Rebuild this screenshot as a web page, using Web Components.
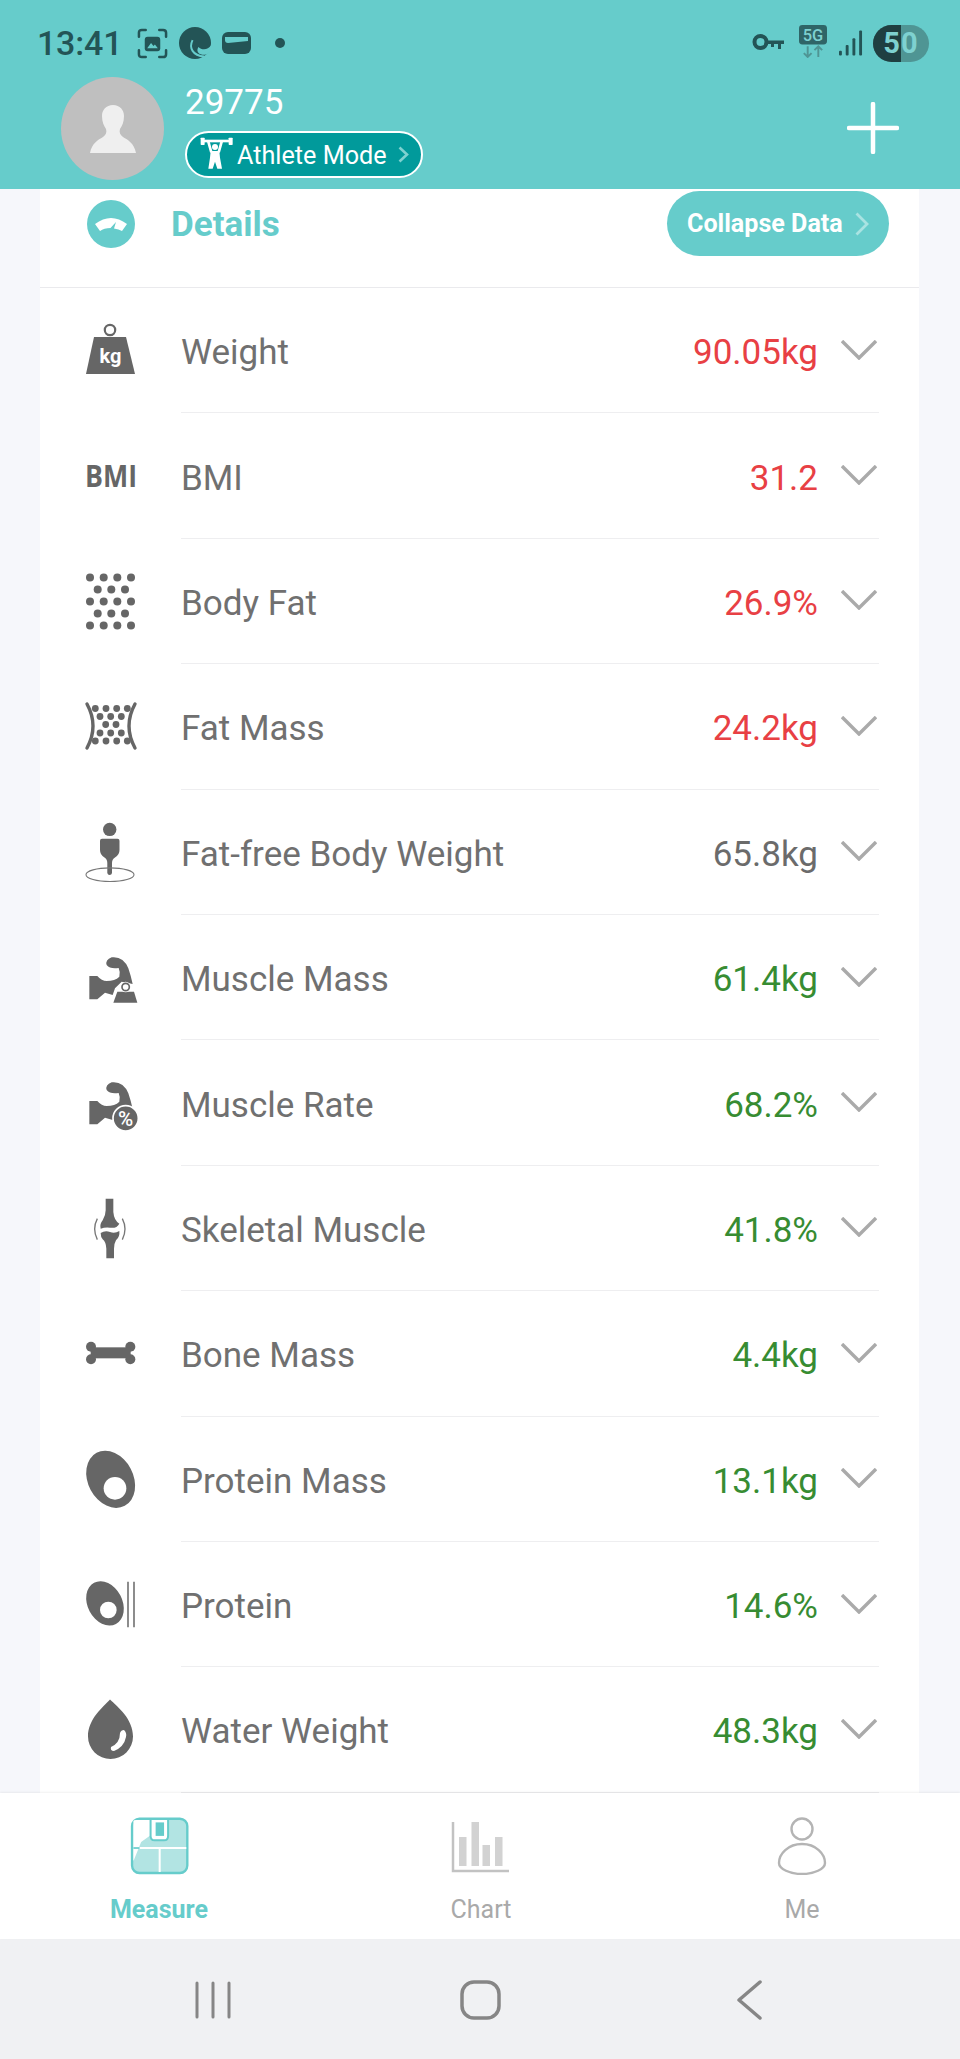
<!DOCTYPE html>
<html>
<head>
<meta charset="utf-8">
<title>Measure</title>
<style>
  html, body { margin: 0; padding: 0; height: 100%; }
  body { font-family: Roboto, "Liberation Sans", sans-serif; background: #f6f7fb; }
  app-screen svg { display: block; }
</style>
</head>
<body>
<app-screen>
  <status-bar slot="top"></status-bar>
  <user-header slot="top" name="29775" mode="Athlete Mode"></user-header>

  <details-head></details-head>

  <metric-row label="Weight" value="90.05kg" tone="bad">
    <svg viewBox="0 0 60 60" width="60" height="60" overflow="visible"><circle cx="28" cy="12" r="5.2" fill="none" stroke="#666" stroke-width="2.2"/><path d="M12 19H44L53 56H4Z" fill="#666"/><text x="28.5" y="45" text-anchor="middle" font-family="Roboto" font-weight="700" font-size="20" fill="#fff">kg</text></svg>
  </metric-row>
  <metric-row label="BMI" value="31.2" tone="bad">
    <svg viewBox="0 0 60 60" width="60" height="60" overflow="visible"><text x="3" y="42.5" font-family="Open Sans" font-weight="700" font-size="30" textLength="52" lengthAdjust="spacingAndGlyphs" fill="#666">BMI</text></svg>
  </metric-row>
  <metric-row label="Body Fat" value="26.9%" tone="bad">
    <svg viewBox="0 0 60 60" width="60" height="60" overflow="visible" fill="#666"><circle cx="8" cy="8.5" r="4"/><circle cx="21.7" cy="8.5" r="4"/><circle cx="35.3" cy="8.5" r="4"/><circle cx="49" cy="8.5" r="4"/><circle cx="8" cy="32.5" r="4"/><circle cx="21.7" cy="32.5" r="4"/><circle cx="35.3" cy="32.5" r="4"/><circle cx="49" cy="32.5" r="4"/><circle cx="8" cy="56.5" r="4"/><circle cx="21.7" cy="56.5" r="4"/><circle cx="35.3" cy="56.5" r="4"/><circle cx="49" cy="56.5" r="4"/><circle cx="15.7" cy="20.5" r="4"/><circle cx="29.3" cy="20.5" r="4"/><circle cx="43" cy="20.5" r="4"/><circle cx="15.7" cy="44.5" r="4"/><circle cx="29.3" cy="44.5" r="4"/><circle cx="43" cy="44.5" r="4"/></svg>
  </metric-row>
  <metric-row label="Fat Mass" value="24.2kg" tone="bad">
    <svg viewBox="0 0 60 60" width="60" height="60" overflow="visible" fill="#666"><path d="M5 10Q17 32 5 54M53 10Q41 32 53 54" fill="none" stroke="#666" stroke-width="3.4" stroke-linecap="round"/><circle cx="13.3" cy="14.5" r="3.4"/><circle cx="24" cy="14.5" r="3.4"/><circle cx="34.7" cy="14.5" r="3.4"/><circle cx="45.3" cy="14.5" r="3.4"/><circle cx="18" cy="22.5" r="3.4"/><circle cx="28.7" cy="22.5" r="3.4"/><circle cx="39.3" cy="22.5" r="3.4"/><circle cx="23.7" cy="30.5" r="3.4"/><circle cx="34" cy="30.5" r="3.4"/><circle cx="18" cy="39" r="3.4"/><circle cx="28.7" cy="39" r="3.4"/><circle cx="39.3" cy="39" r="3.4"/><circle cx="13.3" cy="47" r="3.4"/><circle cx="24" cy="47" r="3.4"/><circle cx="34.7" cy="47" r="3.4"/><circle cx="45.3" cy="47" r="3.4"/></svg>
  </metric-row>
  <metric-row label="Fat-free Body Weight" value="65.8kg">
    <svg viewBox="0 0 60 60" width="60" height="60" overflow="visible" fill="#666"><circle cx="27.7" cy="9.4" r="6.7"/><path d="M20 18.7H35.5A2 2 0 0 1 37.5 20.7V30Q37.5 35 33 37.5Q30 39 30 43V53A2.4 2.4 0 0 1 25.3 53V43Q25.3 39 22.5 37.5Q18 35 18 30V20.7A2 2 0 0 1 20 18.7Z"/><ellipse cx="28" cy="54.7" rx="24" ry="6.8" fill="none" stroke="#777" stroke-width="1.1"/></svg>
  </metric-row>
  <metric-row label="Muscle Mass" value="61.4kg" tone="good">
    <svg viewBox="66 795 180 180" width="60" height="60" overflow="visible" fill="#666"><path d="M88 888L112 888Q125 903 140 903Q165 903 178 890Q182 878 176 864Q150 868 140 855Q135 840 155 832Q190 828 205 865Q212 885 218 912L185 905L165 925L158 945L135 938L112 958L88 958Z"/><path d="M172 935H222L232 968H160Z" stroke="#fff" stroke-width="8" paint-order="stroke" stroke-linejoin="round"/><circle cx="197" cy="921" r="13" fill="#fff" stroke="#fff" stroke-width="6"/><circle cx="197" cy="921" r="11" fill="none" stroke="#666" stroke-width="5"/></svg>
  </metric-row>
  <metric-row label="Muscle Rate" value="68.2%" tone="good">
    <svg viewBox="66 91 180 180" width="60" height="60" overflow="visible" fill="#666"><path transform="translate(0,-707)" d="M88 888L112 888Q125 903 140 903Q165 903 178 890Q182 878 176 864Q150 868 140 855Q135 840 155 832Q190 828 205 865Q212 885 218 912L185 905L165 925L158 945L135 938L112 958L88 958Z"/><circle cx="197" cy="233" r="38" stroke="#fff" stroke-width="5"/><text x="197" y="256" text-anchor="middle" font-family="Roboto" font-weight="500" font-size="62" fill="#fff">%</text></svg>
  </metric-row>
  <metric-row label="Skeletal Muscle" value="41.8%" tone="good">
    <svg viewBox="66 467 180 180" width="60" height="60" overflow="visible" fill="#666"><path d="M137 475H160V515Q162 540 178 550Q170 565 150 562Q135 560 122 565Q118 552 128 540Q137 525 137 510Z"/><path d="M122 578Q135 570 150 575Q165 580 178 572Q180 590 168 600Q162 610 162 625V654H139V625Q138 605 128 597Q122 590 122 578Z"/><path d="M112 535Q96 566 112 598M187 535Q203 566 187 598" fill="none" stroke="#777" stroke-width="4"/></svg>
  </metric-row>
  <metric-row label="Bone Mass" value="4.4kg" tone="good">
    <svg viewBox="66 844 180 180" width="60" height="60" overflow="visible" fill="#666"><circle cx="93" cy="921" r="15"/><circle cx="93" cy="959" r="15"/><circle cx="211" cy="921" r="15"/><circle cx="211" cy="959" r="15"/><rect x="92" y="923" width="120" height="33"/></svg>
  </metric-row>
  <metric-row label="Protein Mass" value="13.1kg" tone="good">
    <svg viewBox="66 140 180 180" width="60" height="60" overflow="visible"><ellipse cx="152" cy="237" rx="68" ry="90" transform="rotate(-28 152 237)" fill="#666"/><circle cx="165" cy="264" r="34" fill="#fff"/></svg>
  </metric-row>
  <metric-row label="Protein" value="14.6%" tone="good">
    <svg viewBox="66 516 180 180" width="60" height="60" overflow="visible"><ellipse cx="135" cy="610" rx="52" ry="70" transform="rotate(-28 135 610)" fill="#666"/><circle cx="145" cy="630" r="25" fill="#fff"/><path d="M204 545V682M222 545V682" stroke="#777" stroke-width="5"/></svg>
  </metric-row>
  <metric-row label="Water Weight" value="48.3kg" tone="good">
    <svg viewBox="0 0 60 60" width="60" height="60" overflow="visible"><path d="M28 2.5C21 10 6 22 6 39.5A22.5 22.5 0 0 0 51 39.5C51 22 36 10 28 2.5Z" fill="#666"/><path d="M42 33Q45 36 44 40Q42 50 32 54Q28 54 29 50Q38 46 38 36Q39 33 42 33Z" fill="#fff"/></svg>
  </metric-row>

  <tab-bar slot="bottom"></tab-bar>
  <nav-bar slot="bottom"></nav-bar>
</app-screen>

<script>
// page frame: fixed top, clipped list, fixed bottom
class AppScreen extends HTMLElement {
  constructor () {
    super()
    const shadow = this.attachShadow({mode: 'open'})
    shadow.innerHTML = `
      <style>
        :host { display: flex; flex-direction: column; height: 2059px; overflow: hidden; background: #f6f7fb; }
        .list { flex: 1; min-height: 0; overflow: hidden; margin: 0 41px 0 40px; background: #fff; }
      </style>
      <slot name="top"></slot>
      <div class="list"><slot></slot></div>
      <slot name="bottom"></slot>
    `
  }
}

class StatusBar extends HTMLElement {
  constructor () {
    super()
    const shadow = this.attachShadow({mode: 'open'})
    shadow.innerHTML = `
      <style>
        :host { display: flex; align-items: center; height: 86px; padding: 0 31px 0 37px; box-sizing: border-box; background: #66cccb; color: #235456; }
        .time { font: 500 34px Roboto, sans-serif; letter-spacing: -.2px; width: 89px; }
        .left { display: flex; align-items: center; gap: 11px; }
        .grow { flex: 1; }
        .right { display: flex; align-items: center; }
        .batt { position: relative; width: 56px; height: 37px; margin-left: 10px; border-radius: 19px; overflow: hidden; background: #4f9594; display: flex; align-items: center; justify-content: center; font: 700 29px Roboto, sans-serif; color: #7ed1d0; }
        .batt::before { content: ""; position: absolute; left: 0; top: 0; bottom: 0; width: 28px; background: #1f3f41; }
        .batt span { position: relative; letter-spacing: 1px; }
        .five { margin: -4px 12px 0 14px; }
        svg { display: block; }
      </style>
      <div class="left">
        <span class="time">13:41</span>
        <svg width="31" height="31" viewBox="0 0 32 32" fill="none" stroke="#235456" stroke-width="2.6" stroke-linecap="round"><path d="M2 9V5Q2 2 5 2H9M23 2H27Q30 2 30 5V9M30 23V27Q30 30 27 30H23M9 30H5Q2 30 2 27V23"/><rect x="8" y="9" width="16" height="15" rx="3" fill="#235456" stroke="none"/><path d="M10.5 21L14.5 15.5 17 18.5 18.5 17 21.5 21Z" fill="#66cccb" stroke="none"/></svg>
        <svg width="32" height="34" viewBox="0 0 33 34"><circle cx="16.5" cy="17" r="16.5" fill="#235456"/><path d="M34 17C32 24 24 25 20 21C17 26 21 30 27 29C30 28 32 26 34 23Z" fill="#66cccb"/><path d="M14 14C10 22 14 30 26 31" fill="none" stroke="#66cccb" stroke-width="2"/></svg>
        <svg width="29" height="22" viewBox="0 0 29 22"><rect width="29" height="22" rx="6" fill="#235456"/><path d="M3 5H26V9L6 11Q3 11 3 8Z" fill="#66cccb"/></svg>
        <svg width="10" height="10" viewBox="0 0 10 10" style="margin-left:13px"><circle cx="5" cy="5" r="5" fill="#235456"/></svg>
      </div>
      <div class="grow"></div>
      <div class="right">
        <svg width="33" height="20" viewBox="0 0 33 20" fill="none"><circle cx="8.5" cy="9" r="6" stroke="#235456" stroke-width="4"/><path d="M14 7.5H32V11H29V16H26V11H22V14H19V11H14Z" fill="#235456"/></svg>
        <svg class="five" width="28" height="33" viewBox="0 0 29 34"><rect width="29" height="20" rx="3.5" fill="#2f6567"/><text x="14.5" y="16" text-anchor="middle" font-family="Roboto" font-weight="500" font-size="17" fill="#7ed1d0">5G</text><path d="M9 22V33M5 29L9 33 13 29M20 33V22M16 26L20 22 24 26" fill="none" stroke="#4f9594" stroke-width="2"/></svg>
        <svg width="24" height="26" viewBox="0 0 25 26" fill="#235456"><rect x="0" y="21" width="3" height="5" rx="1"/><rect x="7" y="15" width="3" height="11" rx="1"/><rect x="14" y="8" width="3" height="18" rx="1"/><rect x="21" y="0" width="3" height="26" rx="1"/></svg>
        <div class="batt"><span>50</span></div>
      </div>
    `
  }
}

class UserHeader extends HTMLElement {
  constructor () {
    super()
    const shadow = this.attachShadow({mode: 'open'})
    shadow.innerHTML = `
      <style>
        :host { display: flex; align-items: flex-start; height: 103px; padding-left: 61px; padding-right: 61px; box-sizing: border-box; background: #66cccb; color: #fff; }
        .avatar { flex: none; width: 103px; height: 103px; margin-top: -9px; border-radius: 50%; background: #bfbfbf; display: flex; align-items: center; justify-content: center; }
        .who { margin-left: 21px; flex: 1; }
        .name { font: 400 35px/36px Roboto, sans-serif; margin-top: -1px; }
        .mode { display: flex; align-items: center; height: 47px; width: 238px; margin-top: 10px; box-sizing: border-box; border: 2px solid #fff; border-radius: 24px; background: #019a9b; font: 400 25.2px Roboto, sans-serif; padding-left: 13px; }
        .mode span { margin-left: 4px; position: relative; top: 1px; }
        .mode .chev { margin-left: 11px; }
        .plus { margin-top: 16px; }
        svg { display: block; }
      </style>
      <div class="avatar">
        <svg width="46" height="48" viewBox="0 0 46 48" fill="#efefef"><path d="M23 0C30 0 34 5 34 11C34 17 32 21 30 24C29 27 30 30 33 32C38 35 44 38 46 48H0C2 38 8 35 13 32C16 30 17 27 16 24C14 21 12 17 12 11C12 5 16 0 23 0Z"/></svg>
      </div>
      <div class="who">
        <div class="name">${this.getAttribute('name')}</div>
        <div class="mode">
          <svg width="33" height="35" viewBox="58 38 99 105"><g fill="#fff"><rect x="60" y="40" width="12" height="22" rx="2"/><rect x="144" y="40" width="12" height="22" rx="2"/><rect x="66" y="46" width="84" height="8"/><circle cx="103" cy="68" r="9"/><path d="M90 80H116L118 100L124 133H110L103 112L96 133H83L88 100Z"/></g><path d="M83 52L92 84M123 52L114 84" stroke="#fff" stroke-width="8" fill="none"/></svg>
          <span>${this.getAttribute('mode')}</span>
          <svg class="chev" width="11" height="17" viewBox="0 0 11 17" fill="none" stroke="#7ed1d0" stroke-width="2.6"><path d="M1.5 1.5L9 8.5 1.5 15.5"/></svg>
        </div>
      </div>
      <svg class="plus" width="52" height="52" viewBox="0 0 52 52" fill="none" stroke="#fff" stroke-width="4.5" stroke-linecap="round"><path d="M26 2V50M2 26H50"/></svg>
    `
  }
}

class DetailsHead extends HTMLElement {
  constructor () {
    super()
    const shadow = this.attachShadow({mode: 'open'})
    shadow.innerHTML = `
      <style>
        :host { display: flex; align-items: center; height: 99px; box-sizing: border-box; padding: 0 30px 29px 47px; border-bottom: 1px solid #eaeaed; }
        .badge { width: 48px; height: 48px; border-radius: 50%; background: #66cccb; display: flex; align-items: center; justify-content: center; }
        h2 { margin: 0 0 0 36px; flex: 1; font: 700 35px Roboto, sans-serif; color: #66cccb; position: relative; top: 1px; }
        .btn { display: flex; align-items: center; height: 65px; width: 222px; box-sizing: border-box; padding-left: 20px; border-radius: 33px; background: #66cccb; color: #fff; font: 700 25.1px Roboto, sans-serif; }
        .btn svg { margin-left: 12px; }
        svg { display: block; }
      </style>
      <div class="badge"><svg width="32" height="14" viewBox="0 0 32 14" fill="#fff"><path d="M0 7Q16 -5 32 7L27 14Q24 12 19 11.5L21 5 15.5 11Q9 11 5 14Z"/></svg></div>
      <h2>Details</h2>
      <div class="btn">Collapse Data<svg width="14" height="24" viewBox="0 0 14 24" fill="none" stroke="#a9e3e2" stroke-width="2.8"><path d="M1.5 1.5L12 12 1.5 22.5"/></svg></div>
    `
  }
}

class MetricRow extends HTMLElement {
  constructor () {
    super()
    const shadow = this.attachShadow({mode: 'open'})
    const tones = {bad: '#e84044', good: '#378c32'}
    const color = tones[this.getAttribute('tone')] || '#6b6b6b'
    shadow.innerHTML = `
      <style>
        :host { display: block; height: 125.4px; padding-left: 42px; box-sizing: border-box; }
        .row { display: flex; align-items: center; height: 100%; }
        .icon { flex: none; width: 60px; height: 60px; margin-top: -5px; }
        .body { flex: 1; display: flex; align-items: center; height: 100%; margin-left: 39px; margin-right: 40px; padding-top: 5px; box-sizing: border-box; border-bottom: 1px solid #eeeef0; font: 400 35px Roboto, sans-serif; color: #707070; }
        .label { flex: 1; }
        .value { color: ${color}; }
        svg { display: block; margin: -6px 2px 0 23px; }
      </style>
      <div class="row">
        <div class="icon"><slot></slot></div>
        <div class="body">
          <span class="label">${this.getAttribute('label')}</span>
          <span class="value">${this.getAttribute('value')}</span>
          <svg width="36" height="20" viewBox="0 0 36 20" fill="none" stroke="#aaa" stroke-width="3.4"><path d="M1 1L18 18 35 1"/></svg>
        </div>
      </div>
    `
  }
}

class TabBar extends HTMLElement {
  constructor () {
    super()
    const shadow = this.attachShadow({mode: 'open'})
    shadow.innerHTML = `
      <style>
        :host { display: grid; grid-template-columns: 318px 326px 316px; height: 146px; box-sizing: border-box; padding-top: 24px; background: #fff; position: relative; box-shadow: 0 -1px 2px rgba(0,0,0,.06); }
        .tab { display: flex; flex-direction: column; align-items: center; font: 400 25px Roboto, sans-serif; color: #a9a9a9; }
        .tab.on { color: #66cccb; font-weight: 700; }
        .tab span { margin-top: 20px; line-height: 29px; }
        svg { display: block; }
      </style>
      <div class="tab on">
        <svg width="60" height="58" viewBox="24 38 178 168"><rect x="33" y="41" width="164" height="161" rx="22" fill="#b2e4e3" stroke="#66cccb" stroke-width="7"/><path d="M37 48Q37 45 45 45H88V90L60 110L38 165H37Z" fill="#fff"/><path d="M55 128H194M115 128V199" stroke="#fff" stroke-width="6" fill="none"/><path d="M37 128H55" stroke="#66cccb" stroke-width="5"/><path d="M88 42H140V92Q140 105 128 105H100Q88 105 88 92Z" fill="#fff" stroke="#66cccb" stroke-width="6"/><rect x="103" y="52" width="25" height="40" fill="#66cccb"/></svg>
        <span>Measure</span>
      </div>
      <div class="tab">
        <svg width="60" height="58" viewBox="0 0 60 58" fill="#d2d2d2"><path d="M2 5V54H58" fill="none" stroke="#c2c2c2" stroke-width="2.5"/><rect x="8" y="20" width="7.5" height="29"/><rect x="20.5" y="5" width="7.5" height="44"/><rect x="31.5" y="28" width="7.5" height="21"/><rect x="44" y="20" width="7.5" height="29"/></svg>
        <span>Chart</span>
      </div>
      <div class="tab">
        <svg width="60" height="58" viewBox="0 0 60 58" fill="none" stroke="#b4b4b4" stroke-width="2.4"><circle cx="30" cy="12" r="10.5"/><path d="M30 27C44 27 53 37 53 46C53 52 42 57 30 57C18 57 7 52 7 46C7 37 16 27 30 27Z"/></svg>
        <span>Me</span>
      </div>
    `
  }
}

class NavBar extends HTMLElement {
  constructor () {
    super()
    const shadow = this.attachShadow({mode: 'open'})
    shadow.innerHTML = `
      <style>
        :host { display: flex; align-items: center; height: 120px; padding: 2px 0 0 195px; box-sizing: border-box; background: #f0f1f3; }
        .home { margin-left: 229px; }
        .back { margin-left: 235px; }
        svg { display: block; }
      </style>
      <svg width="36" height="38" viewBox="0 0 36 38" stroke="#868686" stroke-width="3" stroke-linecap="round"><path d="M2 2V36M18 2V36M34 2V36"/></svg>
      <svg class="home" width="41" height="40" viewBox="0 0 41 40" fill="none" stroke="#868686" stroke-width="3.5"><rect x="2" y="2" width="37" height="36" rx="12"/></svg>
      <svg class="back" width="26" height="40" viewBox="0 0 26 40" fill="none" stroke="#868686" stroke-width="3.5" stroke-linecap="round" stroke-linejoin="round"><path d="M24 2L3 20 24 38"/></svg>
    `
  }
}

customElements.define('app-screen', AppScreen)
customElements.define('status-bar', StatusBar)
customElements.define('user-header', UserHeader)
customElements.define('details-head', DetailsHead)
customElements.define('metric-row', MetricRow)
customElements.define('tab-bar', TabBar)
customElements.define('nav-bar', NavBar)
</script>
</body>
</html>
